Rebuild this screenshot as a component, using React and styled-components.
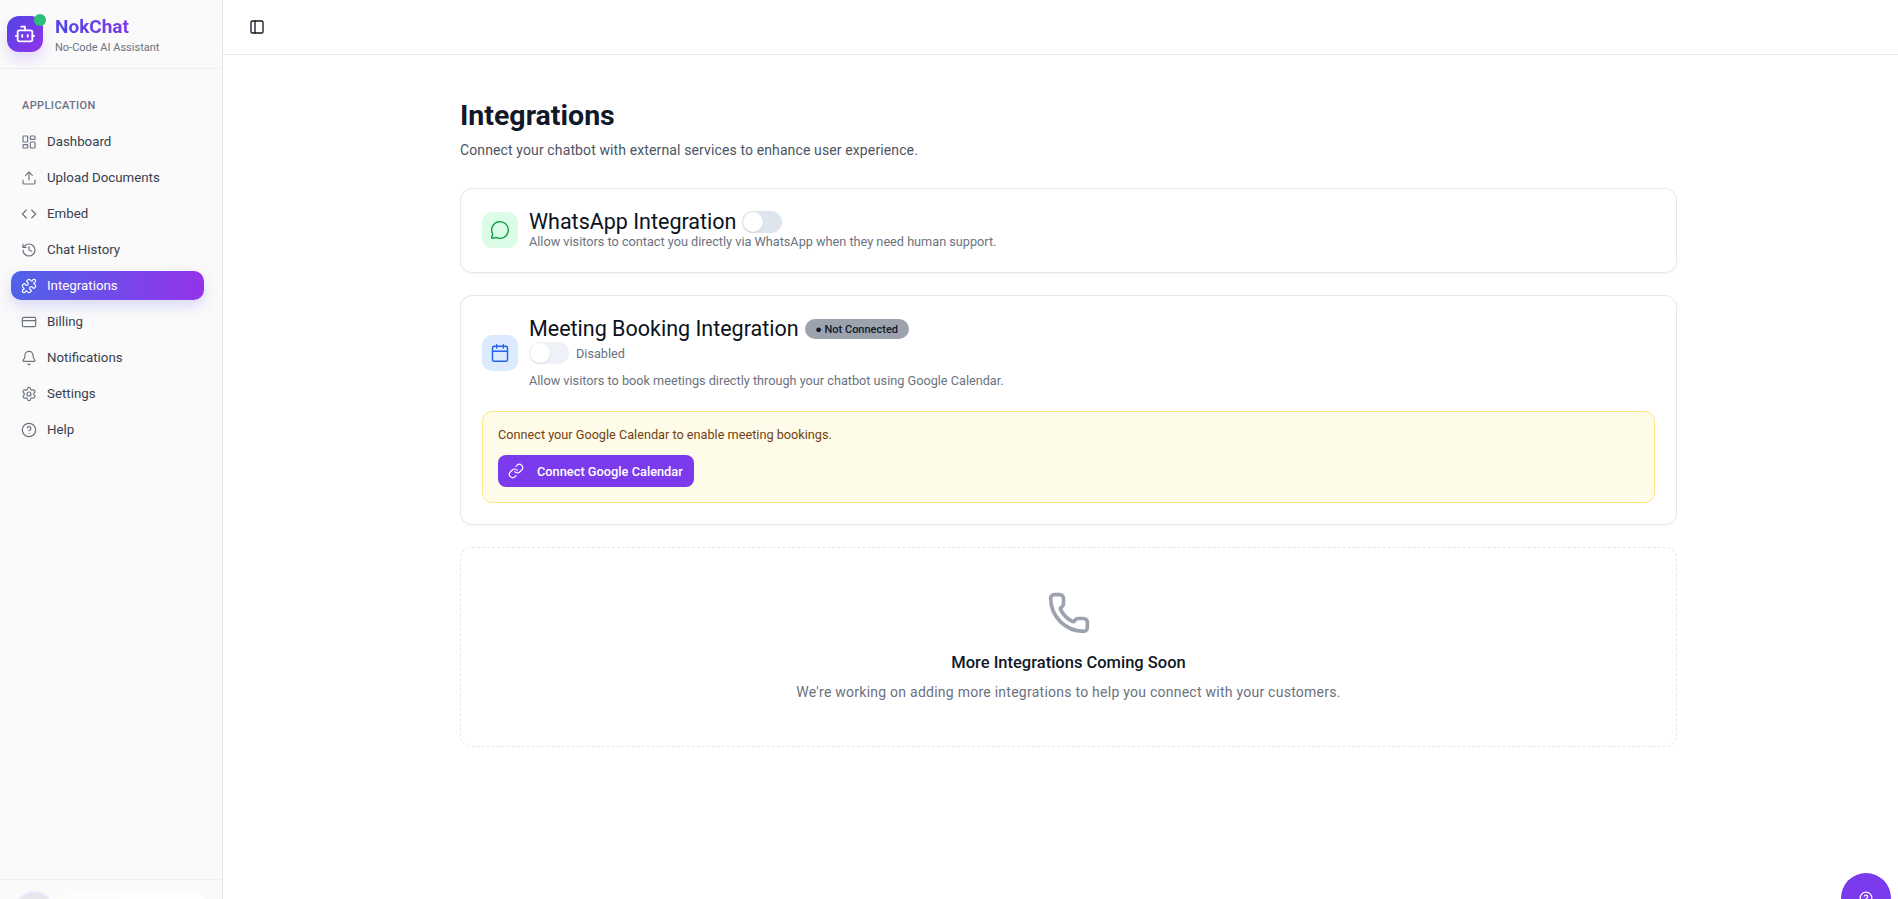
import React from 'react'
import styled, { createGlobalStyle } from 'styled-components'
import {
  Bell, Bot, Calendar, CircleHelp, Code, CreditCard, History, LayoutDashboard,
  Link, MessageCircle, PanelLeft, Phone, Puzzle, Settings, Upload,
} from 'lucide-react'

const GlobalStyle = createGlobalStyle`
  html, body { margin: 0; padding: 0; height: 100%; overflow: hidden; background: #fff; }
  body { font-family: Roboto, "Noto Sans", sans-serif; color: #0f172a; }
  * { box-sizing: border-box; }
`

const Shell = styled.div`
  display: flex;
  height: 899px;
  overflow: hidden;
`

const Sidebar = styled.aside`
  width: 223px;
  flex-shrink: 0;
  display: flex;
  flex-direction: column;
  background: #fafafa;
  border-right: 1px solid #e5e7eb;
`

const Brand = styled.div`
  height: 69px;
  display: flex;
  align-items: flex-start;
  gap: 12px;
  padding: 16px 7px 0;
  border-bottom: 1px solid #f0f0f2;
`

const LogoBox = styled.div`
  position: relative;
  width: 36px;
  height: 36px;
  border-radius: 12px;
  display: flex;
  align-items: center;
  justify-content: center;
  color: #fff;
  background: linear-gradient(135deg, #4f46e5, #9333ea);
  box-shadow: 0 8px 14px rgba(124, 58, 237, 0.16);
`

const StatusDot = styled.span`
  position: absolute;
  top: -2px;
  right: -3px;
  width: 12px;
  height: 12px;
  border-radius: 50%;
  background: #2bbf76;
`

const BrandText = styled.div`
  display: flex;
  flex-direction: column;
`

const BrandName = styled.div`
  font-size: 19px;
  font-weight: 700;
  line-height: 22px;
  background: linear-gradient(90deg, #4f46e5, #9333ea);
  -webkit-background-clip: text;
  background-clip: text;
  color: transparent;
`

const BrandTag = styled.div`
  font-size: 11px;
  line-height: 16px;
  margin-top: 2px;
  color: #6b7280;
`

const Nav = styled.nav`
  flex: 1;
  padding: 29px 18px 0 11px;
`

const NavLabel = styled.div`
  font-size: 11px;
  line-height: 16px;
  font-weight: 500;
  letter-spacing: 0.4px;
  color: #6b7280;
  padding-left: 11px;
  margin-bottom: 13px;
`

const NavList = styled.div`
  display: flex;
  flex-direction: column;
  gap: 7px;
`

const NavItem = styled.a`
  height: 29px;
  display: flex;
  align-items: center;
  gap: 10px;
  padding-left: 10px;
  border-radius: 10px;
  font-size: 13.3px;
  font-weight: 400;
  color: ${p => (p.$active ? '#fff' : '#374151')};
  background: ${p => (p.$active ? 'linear-gradient(90deg, #4f63e8, #9333ea)' : 'transparent')};
  box-shadow: ${p => (p.$active ? '0 6px 14px rgba(99, 102, 241, 0.22)' : 'none')};
  svg { color: ${p => (p.$active ? '#fff' : '#6b7280')}; flex-shrink: 0; }
`

const SidebarFoot = styled.div`
  height: 20px;
  border-top: 1px solid #f0f0f2;
  padding: 11px 17px 0 6px;
  overflow: hidden;
`

const UserCard = styled.div`
  height: 50px;
  padding-left: 9px;
  border-radius: 12px;
  background: linear-gradient(90deg, #fafafa, #ffffff);
`

const Avatar = styled.div`
  width: 38px;
  height: 38px;
  border-radius: 50%;
  background: #e5e7eb;
  border: 2px solid #ede9fe;
`

const Main = styled.main`
  flex: 1;
  display: flex;
  flex-direction: column;
  min-width: 0;
`

const TopBar = styled.header`
  height: 55px;
  display: flex;
  align-items: center;
  padding-left: 26px;
  border-bottom: 1px solid #e5e7eb;
  color: #111827;
`

const Content = styled.div`
  width: 1217px;
  margin-left: 237px;
  padding-top: 45px;
  display: flex;
  flex-direction: column;
`

const Title = styled.h1`
  margin: 0;
  font-size: 28.5px;
  line-height: 32px;
  font-weight: 700;
  color: #111827;
`

const Subtitle = styled.p`
  margin: 8px 0 28px;
  font-size: 14px;
  line-height: 20px;
  letter-spacing: 0.12px;
  color: #4b5563;
`

const Card = styled.section`
  background: #fff;
  border: 1px solid #e5e7eb;
  border-radius: 12px;
  padding: 21px 21px ${p => p.$bottom || '21px'};
  margin-bottom: 22px;
  box-shadow: 0 1px 2px rgba(0, 0, 0, 0.04);
`

const CardHead = styled.div`
  display: flex;
  align-items: center;
  gap: 11px;
`

const IconBox = styled.div`
  width: 36px;
  height: 36px;
  border-radius: 10px;
  display: flex;
  align-items: center;
  justify-content: center;
  flex-shrink: 0;
  color: ${p => p.$color};
  background: ${p => p.$bg};
`

const CardTitleRow = styled.div`
  display: flex;
  align-items: center;
  gap: 6px;
`

const CardTitle = styled.h2`
  margin: 0;
  font-size: 21.5px;
  line-height: 24px;
  font-weight: 400;
  color: #0b1220;
`

const CardDesc = styled.p`
  margin: ${p => p.$margin || 0};
  font-size: 12.7px;
  line-height: 16px;
  color: #6b7280;
`

const Toggle = styled.span`
  width: 40px;
  height: 22px;
  border-radius: 11px;
  position: relative;
  display: inline-block;
  flex-shrink: 0;
  background: ${p => (p.$muted ? '#eef1f6' : '#dfe5ee')};
  &::after {
    content: '';
    position: absolute;
    left: 1px;
    top: 1px;
    width: 20px;
    height: 20px;
    border-radius: 50%;
    background: #fff;
    box-shadow: 0 1px 2px rgba(0, 0, 0, 0.1);
  }
`

const Badge = styled.span`
  height: 20px;
  display: inline-flex;
  align-items: center;
  padding: 0 10.5px;
  border-radius: 10px;
  font-size: 11px;
  font-weight: 500;
  color: #111827;
  background: #9ca3af;
`

const ToggleRow = styled.div`
  display: flex;
  align-items: center;
  gap: 7px;
  margin-top: 1px;
  font-size: 12.7px;
  color: #6b7280;
`

const Notice = styled.div`
  margin-top: 22px;
  padding: 14px 15px;
  height: 92px;
  border: 1px solid #fde68a;
  border-radius: 10px;
  background: #fefce8;
`

const NoticeText = styled.p`
  margin: 0 0 11px;
  font-size: 12.7px;
  line-height: 18px;
  color: #713f12;
`

const ConnectButton = styled.button`
  height: 32px;
  width: 196px;
  padding: 0 0 0 10px;
  display: flex;
  align-items: center;
  gap: 13px;
  border: 0;
  border-radius: 8px;
  font-family: inherit;
  font-size: 12.8px;
  font-weight: 500;
  white-space: nowrap;
  color: #fff;
  background: #7c3aed;
`

const SoonCard = styled.section`
  height: 200px;
  border: 1px dashed #e5e7eb;
  border-radius: 12px;
  display: flex;
  flex-direction: column;
  align-items: center;
  padding-top: 43px;
  color: #9ca3af;
`

const SoonTitle = styled.h3`
  margin: 17px 0 0;
  font-size: 16.5px;
  line-height: 22px;
  font-weight: 500;
  color: #111827;
`

const SoonText = styled.p`
  margin: 8px 0 0;
  font-size: 14px;
  line-height: 20px;
  letter-spacing: 0.25px;
  color: #6b7280;
`

const Fab = styled.button`
  position: fixed;
  right: 7px;
  bottom: -24px;
  width: 50px;
  height: 50px;
  border: 0;
  padding: 0;
  border-radius: 50%;
  display: flex;
  align-items: center;
  justify-content: center;
  color: #fff;
  background: #7c3aed;
`

const navItems = [
  { label: 'Dashboard', icon: LayoutDashboard },
  { label: 'Upload Documents', icon: Upload },
  { label: 'Embed', icon: Code },
  { label: 'Chat History', icon: History },
  { label: 'Integrations', icon: Puzzle, active: true },
  { label: 'Billing', icon: CreditCard },
  { label: 'Notifications', icon: Bell },
  { label: 'Settings', icon: Settings },
  { label: 'Help', icon: CircleHelp },
]

const App = () => {
  return (
    <Shell>
      <GlobalStyle />
      <Sidebar>
        <Brand>
          <LogoBox>
            <Bot size={22} strokeWidth={2} />
            <StatusDot />
          </LogoBox>
          <BrandText>
            <BrandName>NokChat</BrandName>
            <BrandTag>No-Code AI Assistant</BrandTag>
          </BrandText>
        </Brand>
        <Nav>
          <NavLabel>APPLICATION</NavLabel>
          <NavList>
            {navItems.map(({ label, icon: Icon, active }) => (
              <NavItem key={label} $active={active}>
                <Icon size={16} strokeWidth={1.75} />
                {label}
              </NavItem>
            ))}
          </NavList>
        </Nav>
        <SidebarFoot>
          <UserCard>
            <Avatar />
          </UserCard>
        </SidebarFoot>
      </Sidebar>
      <Main>
        <TopBar>
          <PanelLeft size={16} strokeWidth={2} />
        </TopBar>
        <Content>
          <Title>Integrations</Title>
          <Subtitle>Connect your chatbot with external services to enhance user experience.</Subtitle>

          <Card $bottom="22px">
            <CardHead>
              <IconBox $color="#16a34a" $bg="#dcfce7">
                <MessageCircle size={20} strokeWidth={1.75} />
              </IconBox>
              <div>
                <CardTitleRow>
                  <CardTitle>WhatsApp Integration</CardTitle>
                  <Toggle />
                </CardTitleRow>
                <CardDesc>Allow visitors to contact you directly via WhatsApp when they need human support.</CardDesc>
              </div>
            </CardHead>
          </Card>

          <Card>
            <CardHead>
              <IconBox $color="#2563eb" $bg="#dbeafe">
                <Calendar size={20} strokeWidth={1.75} />
              </IconBox>
              <div>
                <CardTitleRow>
                  <CardTitle>Meeting Booking Integration</CardTitle>
                  <Badge>● Not Connected</Badge>
                </CardTitleRow>
                <ToggleRow>
                  <Toggle $muted />
                  Disabled
                </ToggleRow>
                <CardDesc $margin="9px 0 0">Allow visitors to book meetings directly through your chatbot using Google Calendar.</CardDesc>
              </div>
            </CardHead>
            <Notice>
              <NoticeText>Connect your Google Calendar to enable meeting bookings.</NoticeText>
              <ConnectButton>
                <Link size={16} strokeWidth={1.75} />
                Connect Google Calendar
              </ConnectButton>
            </Notice>
          </Card>

          <SoonCard>
            <Phone size={44} strokeWidth={2} />
            <SoonTitle>More Integrations Coming Soon</SoonTitle>
            <SoonText>We're working on adding more integrations to help you connect with your customers.</SoonText>
          </SoonCard>
        </Content>
      </Main>
      <Fab>
        <CircleHelp size={14} />
      </Fab>
    </Shell>
  )
}

export default App
